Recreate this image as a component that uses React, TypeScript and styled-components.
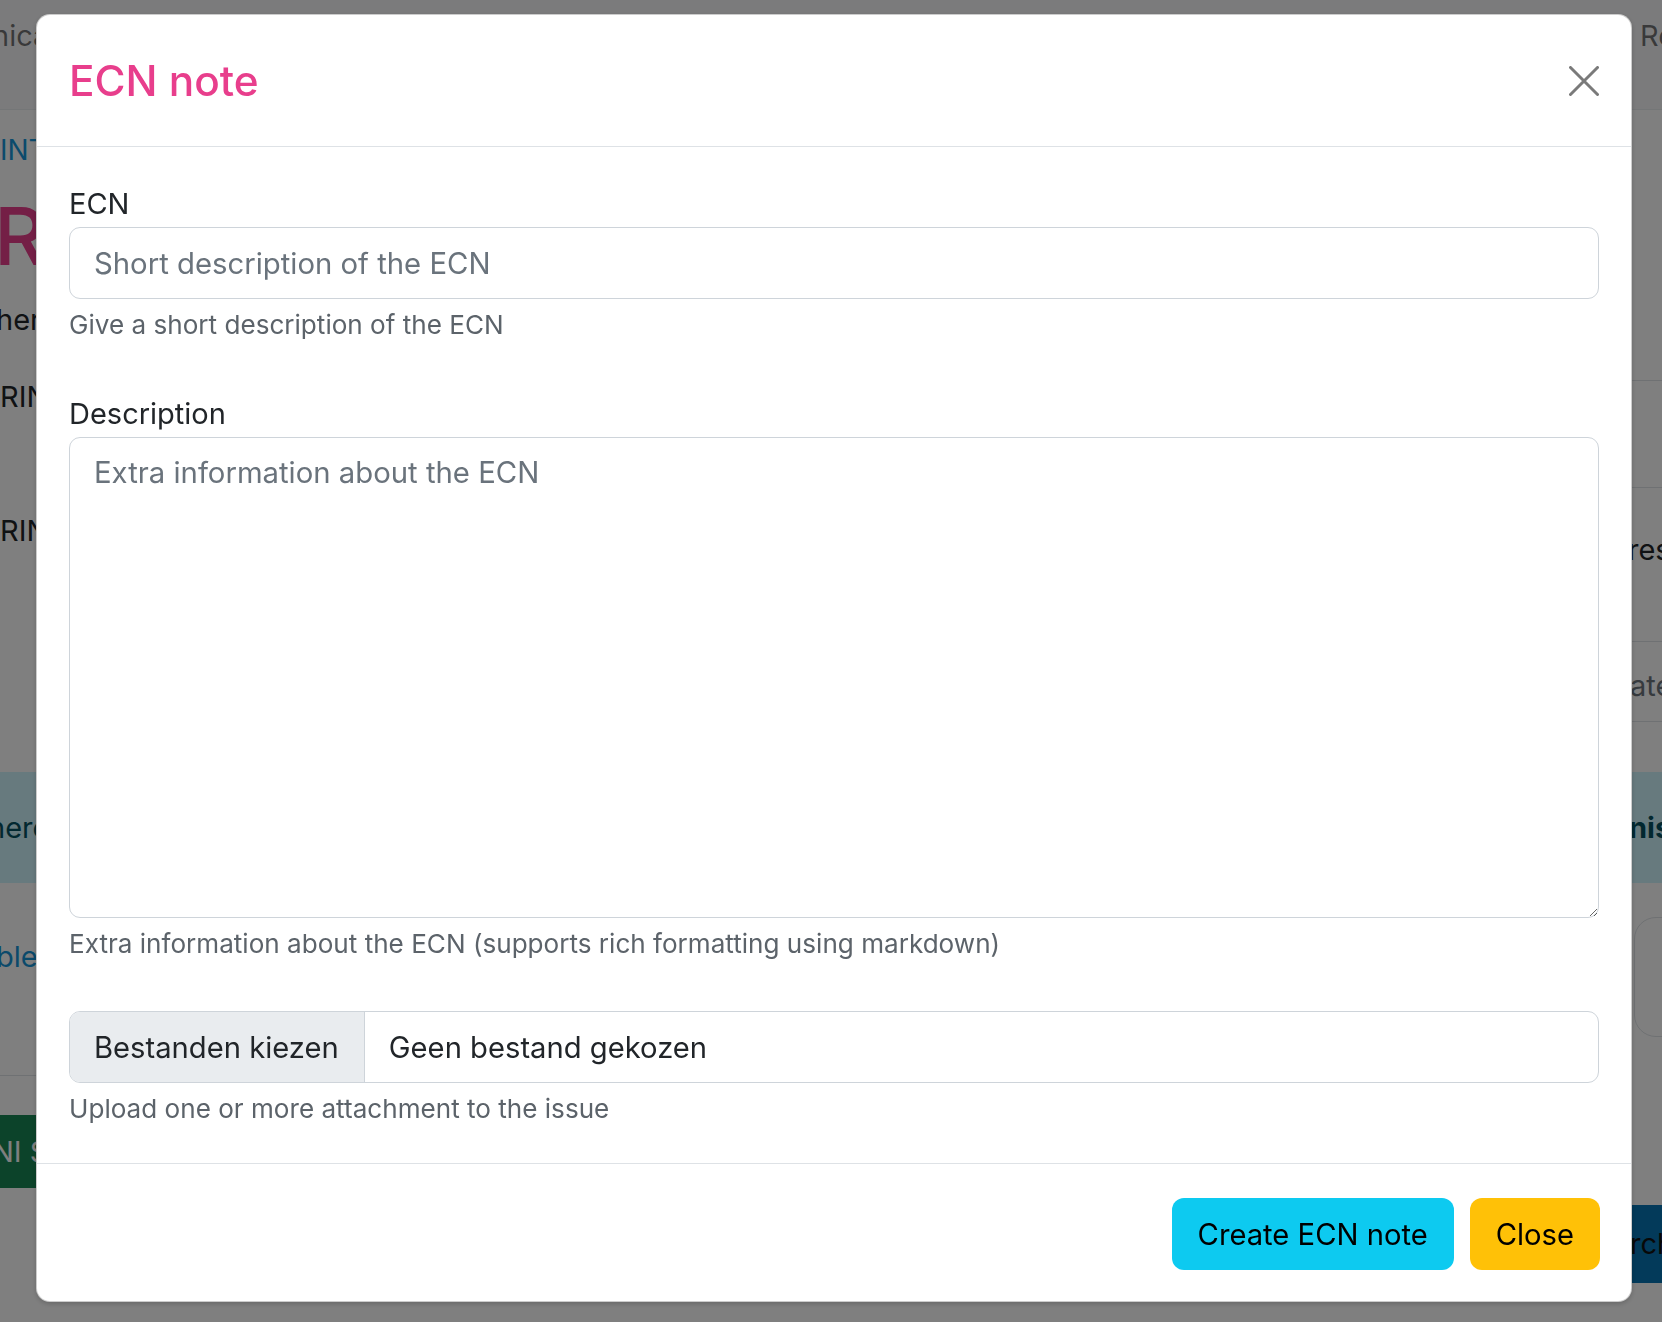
import React from "react";
import styled, { createGlobalStyle } from "styled-components";

const GlobalStyle = createGlobalStyle`
  html, body { margin: 0; padding: 0; }
  body {
    width: 1662px;
    height: 1322px;
    overflow: hidden;
    background: #ffffff;
    font-family: Inter, "Noto Sans", "Liberation Sans", sans-serif;
  }
  *, *::before, *::after { box-sizing: border-box; }
`;

/* ---------- background page (seen through the backdrop) ---------- */

const Page = styled.div`
  width: 1662px;
  height: 1322px;
  overflow: hidden;
  background: #ffffff;
  color: #212529;
  font-size: 29px;
  line-height: 44px;
`;

const Split = styled.div<{ $h: number; $bg?: string }>`
  display: grid;
  grid-template-columns: 1600px 240px;
  height: ${(p) => p.$h}px;
  background: ${(p) => p.$bg ?? "transparent"};
`;

const NavBar = styled(Split)`
  align-items: start;
  padding-top: 14px;
  border-bottom: 1px solid #e9ecef;
`;

const NavLink = styled.span<{ $shift: number }>`
  color: rgba(0, 0, 0, 0.55);
  margin-left: ${(p) => p.$shift}px;
  white-space: nowrap;
`;

const Column = styled.div`
  display: flex;
  flex-direction: column;
  overflow: hidden;
  white-space: nowrap;
`;

const SectionLabel = styled.div<{ $mt: number }>`
  margin-top: ${(p) => p.$mt}px;
  color: #1696d8;
  font-size: 28px;
  line-height: 44px;
`;

const PageTitle = styled.div<{ $mt: number }>`
  margin-top: ${(p) => p.$mt}px;
  margin-left: -6px;
  color: #e83e8c;
  font-size: 80px;
  line-height: 90px;
  font-weight: 500;
`;

const BodyLine = styled.div<{ $mt: number; $shift?: number }>`
  margin-top: ${(p) => p.$mt}px;
  margin-left: ${(p) => p.$shift ?? 0}px;
  color: #212529;
`;

const LinkLine = styled(BodyLine)`
  color: #1694d6;
`;

const TableRow = styled.div<{ $h: number; $pt?: number; $muted?: boolean }>`
  height: ${(p) => p.$h}px;
  padding-top: ${(p) => p.$pt ?? 0}px;
  border-bottom: 1px solid #dee2e6;
  color: ${(p) => (p.$muted ? "#6c757d" : "#212529")};
`;

const InfoBand = styled(Split)`
  align-items: center;
  color: #055160;
`;

const BandText = styled.span<{ $shift: number; $bold?: boolean }>`
  margin-left: ${(p) => p.$shift}px;
  font-weight: ${(p) => (p.$bold ? 700 : 400)};
  white-space: nowrap;
`;

const Divider = styled.div<{ $mt: number }>`
  margin-top: ${(p) => p.$mt}px;
  border-top: 1px solid #dee2e6;
`;

const GreenButton = styled.div<{ $mt: number }>`
  margin-top: ${(p) => p.$mt}px;
  height: 73px;
  background: #198754;
  color: #ffffff;
  display: flex;
  align-items: center;
  margin-left: -8px;
`;

const OutlineBox = styled.div<{ $mt: number }>`
  margin-top: ${(p) => p.$mt}px;
  margin-left: 34px;
  height: 120px;
  border: 1px solid #dee2e6;
  border-radius: 22px;
`;

const BlueButton = styled.div<{ $mt: number }>`
  margin-top: ${(p) => p.$mt}px;
  height: 78px;
  background: #0674b4;
  color: #111;
  display: flex;
  align-items: center;
`;

/* ---------- modal ---------- */

const Backdrop = styled.div`
  position: fixed;
  inset: 0;
  background: rgba(0, 0, 0, 0.5);
`;

const Dialog = styled.div`
  position: fixed;
  left: 36px;
  top: 14px;
  width: 1596px;
  background: #ffffff;
  border: 1px solid rgba(0, 0, 0, 0.2);
  border-radius: 14px;
  box-shadow: 0 2px 5px rgba(0, 0, 0, 0.18);
  display: flex;
  flex-direction: column;
  color: #212529;
  font-family: Inter, "Noto Sans", "Liberation Sans", sans-serif;
`;

const Header = styled.div`
  height: 132px;
  display: flex;
  align-items: center;
  justify-content: space-between;
  padding: 0 32px;
  border-bottom: 1px solid #dee2e6;
`;

const Title = styled.h2`
  margin: 0;
  font-size: 42.3px;
  line-height: 1.5;
  font-weight: 500;
  color: #e83e8c;
`;

const CloseButton = styled.button`
  width: 30px;
  height: 30px;
  padding: 0;
  border: none;
  background: none;
  display: flex;
  cursor: pointer;
`;

const Body = styled.div`
  padding: 35px 32px 35.5px;
  display: flex;
  flex-direction: column;
  gap: 48.5px;
`;

const Field = styled.div`
  display: flex;
  flex-direction: column;
`;

const Label = styled.label`
  display: block;
  font-size: 29px;
  line-height: 44px;
  margin-bottom: 1px;
`;

const controlBase = `
  width: 100%;
  font-family: Inter, "Noto Sans", "Liberation Sans", sans-serif;
  font-size: 29.3px;
  color: #212529;
  background: #ffffff;
  border: 1px solid #ced4da;
  border-radius: 11px;
  outline: none;
  &::placeholder { color: #6a737c; opacity: 1; }
`;

const TextInput = styled.input`
  ${controlBase}
  height: 72px;
  padding: 0 24px;
`;

const TextArea = styled.textarea`
  ${controlBase}
  display: block;
  height: 481px;
  padding: 13px 24px;
  line-height: 1.5;
  resize: vertical;
`;

const HelpText = styled.div`
  margin-top: 7px;
  font-size: 26.1px;
  line-height: 37.5px;
  color: #5c636a;
`;

const FileField = styled.label`
  display: flex;
  height: 72px;
  border: 1px solid #ced4da;
  border-radius: 11px;
  overflow: hidden;
  font-size: 29.2px;
  color: #212529;
`;

const FileButton = styled.span`
  display: flex;
  align-items: center;
  padding: 0 25px 0 24px;
  background: #e9ecef;
  border-right: 1px solid #ced4da;
  white-space: nowrap;
`;

const FileName = styled.span`
  display: flex;
  align-items: center;
  padding-left: 24px;
  flex: 1;
`;

const Footer = styled.div`
  border-top: 1px solid #dee2e6;
  padding: 34px 31px 31px;
  display: flex;
  justify-content: flex-end;
  gap: 16px;
`;

const ActionButton = styled.button<{ $variant: "info" | "warning" }>`
  height: 72px;
  padding: 0 26px;
  border: none;
  border-radius: 12px;
  font-family: Inter, "Noto Sans", "Liberation Sans", sans-serif;
  font-size: 29.2px;
  color: #000000;
  background: ${(p) => (p.$variant === "info" ? "#0dcaf0" : "#ffc107")};
  cursor: pointer;
`;

export default function App() {
  return (
    <>
      <GlobalStyle />
      <Page>
        <NavBar $h={110} $bg="#f6f7f8">
          <NavLink $shift={-8}>nical documentation</NavLink>
          <NavLink $shift={40}>Reports</NavLink>
        </NavBar>

        <Split $h={662}>
          <Column>
            <SectionLabel $mt={18}>INTERNAL</SectionLabel>
            <PageTitle $mt={19}>RELEASE</PageTitle>
            <BodyLine $mt={17} $shift={-4}>here the engineering</BodyLine>
            <BodyLine $mt={33}>RING</BodyLine>
            <BodyLine $mt={90}>RING</BodyLine>
          </Column>
          <Column>
            <TableRow $h={271} />
            <TableRow $h={107} />
            <TableRow $h={154} $pt={40}>
              <BandText $shift={28}>results</BandText>
            </TableRow>
            <TableRow $h={80} $pt={22} $muted>
              <BandText $shift={30}>ateliers</BandText>
            </TableRow>
          </Column>
        </Split>

        <InfoBand $h={111} $bg="#cff4fc">
          <BandText $shift={-12}>here is the information</BandText>
          <BandText $shift={29} $bold>
            nisch
          </BandText>
        </InfoBand>

        <Split $h={439}>
          <Column>
            <LinkLine $mt={52} $shift={-4}>ble items</LinkLine>
            <Divider $mt={96} />
            <GreenButton $mt={39}>NI SAVE</GreenButton>
          </Column>
          <Column>
            <OutlineBox $mt={34} />
            <BlueButton $mt={168}>
              <BandText $shift={30}>rch</BandText>
            </BlueButton>
          </Column>
        </Split>
      </Page>

      <Backdrop />

      <Dialog role="dialog" aria-modal="true">
        <Header>
          <Title>ECN note</Title>
          <CloseButton aria-label="Close">
            <svg width="30" height="30" viewBox="0 0 30 30">
              <path
                d="M1.5 1.5 L28.5 28.5 M28.5 1.5 L1.5 28.5"
                stroke="#7a7a7a"
                strokeWidth="3"
                strokeLinecap="round"
              />
            </svg>
          </CloseButton>
        </Header>

        <Body>
          <Field>
            <Label htmlFor="ecn">ECN</Label>
            <TextInput id="ecn" placeholder="Short description of the ECN" />
            <HelpText>Give a short description of the ECN</HelpText>
          </Field>

          <Field>
            <Label htmlFor="desc">Description</Label>
            <TextArea id="desc" placeholder="Extra information about the ECN" />
            <HelpText>
              Extra information about the ECN (supports rich formatting using
              markdown)
            </HelpText>
          </Field>

          <Field>
            <FileField>
              <FileButton>Bestanden kiezen</FileButton>
              <FileName>Geen bestand gekozen</FileName>
            </FileField>
            <HelpText>Upload one or more attachment to the issue</HelpText>
          </Field>
        </Body>

        <Footer>
          <ActionButton $variant="info">Create ECN note</ActionButton>
          <ActionButton $variant="warning">Close</ActionButton>
        </Footer>
      </Dialog>
    </>
  );
}
